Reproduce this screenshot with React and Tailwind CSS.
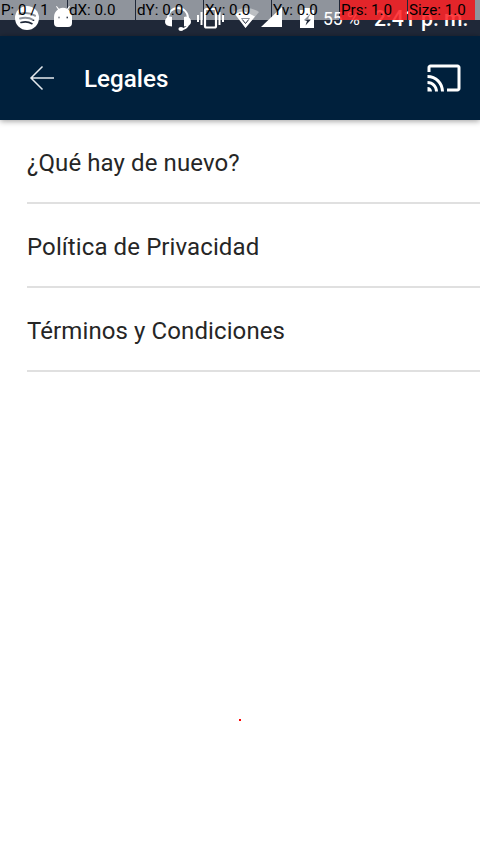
const overlay = [
  ['P: 0 / 1', false],
  ['dX: 0.0', false],
  ['dY: 0.0', false],
  ['Xv: 0.0', false],
  ['Yv: 0.0', false],
  ['Prs: 1.0', true],
  ['Size: 1.0', true],
];

const rows = ['¿Qué hay de nuevo?', 'Política de Privacidad', 'Términos y Condiciones'];

function StatusIcons() {
  return (
    <svg className="block" width="480" height="36" viewBox="0 0 480 36" fill="#fff">
      <circle cx="27" cy="18" r="12" />
      <g fill="none" stroke="#1f2838" strokeLinecap="round">
        <path d="M19.500 14c5-1.600 11-1 15.500 1.600" strokeWidth="2.200" />
        <path d="M20 18.500c5-1.400 9.500-.8 13.500 1.500" strokeWidth="1.900" />
        <path d="M21 22.500c4-1 8-.6 11 1.200" strokeWidth="1.600" />
      </g>
      <path d="M54 17a9 9 0 0 1 4-7.400l-2-3 .8-.6 2.200 2.800a9 9 0 0 1 8 0l2.200-2.800.8.6-2 3a9 9 0 0 1 4 7.400v6q0 4-4 4H58q-4 0-4-4z" />
      <circle cx="59" cy="17.500" r="1" fill="#1f2838" />
      <circle cx="67" cy="17.500" r="1" fill="#1f2838" />
      <path d="M168 18a10 10 0 0 1 20 0" fill="none" stroke="#fff" strokeWidth="1.800" />
      <path d="M165 22q0-5 5-5.500l2 .5v9.500q-7-.5-7-4.500zM191 22q0-5-5-5.500l-2 .5v9.500q7-.5 7-4.500z" />
      <path d="M188 25q-1.500 4-7 4.200" fill="none" stroke="#fff" strokeWidth="2" />
      <ellipse cx="181" cy="29" rx="2.600" ry="1.900" />
      <rect x="205" y="9" width="11" height="18.500" rx="1.500" fill="none" stroke="#fff" strokeWidth="2.200" />
      <path d="M200.500 12h2v13h-2zM197 15h2v7h-2zM218.500 12h2v13h-2zM222 15h2v7h-2z" />
      <path d="M233 12q13-8 26 0L245.500 28z" opacity=".4" />
      <path d="M235 14q9-5 15 0l5 2.500L245.500 28z" />
      <path d="M241.500 18.500h8l-4 5z" fill="#fff" stroke="#1f2838" />
      <path d="M261 27L282 7v20z" />
      <path d="M300 28V10h4V8h6v2h4v18z" />
      <path d="M311 13l-7 7 3 1-1.500 4.500 5.500-6-3-1z" fill="#1f2838" />
      <text x="323" y="25" className="font-[Roboto] text-[17.500px]">55 %</text>
      <text x="374" y="26" className="font-[Roboto] text-[21.200px] font-medium">2:41 p. m.</text>
    </svg>
  );
}

export default function App() {
  return (
    <div className="relative h-[854px] w-[480px] overflow-hidden bg-white font-['Roboto',sans-serif]">
      <div className="relative h-9 bg-[#1f2838]">
        <StatusIcons />
        <div className="absolute inset-x-0 top-0 flex h-5">
          {overlay.map(([label, hot]) => (
            <div
              key={label}
              className={`mr-px h-5 w-[67px] shrink-0 pl-px text-[15.200px] leading-5 whitespace-nowrap text-black last-of-type:mr-0 ${hot ? 'bg-[#ff2428]/88' : 'bg-white/50'}`}
            >
              {label}
            </div>
          ))}
          <div className="-ml-px h-5 grow bg-white/50" />
        </div>
      </div>
      <header className="relative flex h-[84px] items-center bg-[#00203c] pr-[18px] pl-[29px] shadow-[0_1px_6px_rgba(0,0,0,0.4)]">
        <svg width="26" height="26" viewBox="0 0 26 26" fill="none" stroke="#e4e9ed" strokeWidth="1.500">
          <path d="M25 13H2M13.500 1.500L2 13l11.500 11.500" />
        </svg>
        <h1 className="ml-[29px] pt-0.5 text-[24.200px] leading-8 font-medium text-white">Legales</h1>
        <svg className="ml-auto" width="36" height="36" viewBox="0 0 24 24" fill="#fff">
          <path d="M21 3H3c-1.100 0-2 .9-2 2v3h2V5h18v14h-7v2h7c1.100 0 2-.9 2-2V5c0-1.100-.9-2-2-2zM1 18v3h3c0-1.660-1.340-3-3-3zm0-4v2c2.760 0 5 2.240 5 5h2c0-3.870-3.130-7-7-7zm0-4v2c4.970 0 9 4.030 9 9h2c0-6.080-4.930-11-11-11z" />
        </svg>
      </header>
      <ul className="pl-[27px]">
        {rows.map((row) => (
          <li key={row} className="flex h-[84px] items-center border-b-2 border-[#e0e0e0] pt-1 text-2xl tracking-[0.1px] text-[#262626]">
            {row}
          </li>
        ))}
      </ul>
      <div className="absolute top-[719px] left-[239px] size-0.5 bg-[#ff0000]" />
    </div>
  );
}
